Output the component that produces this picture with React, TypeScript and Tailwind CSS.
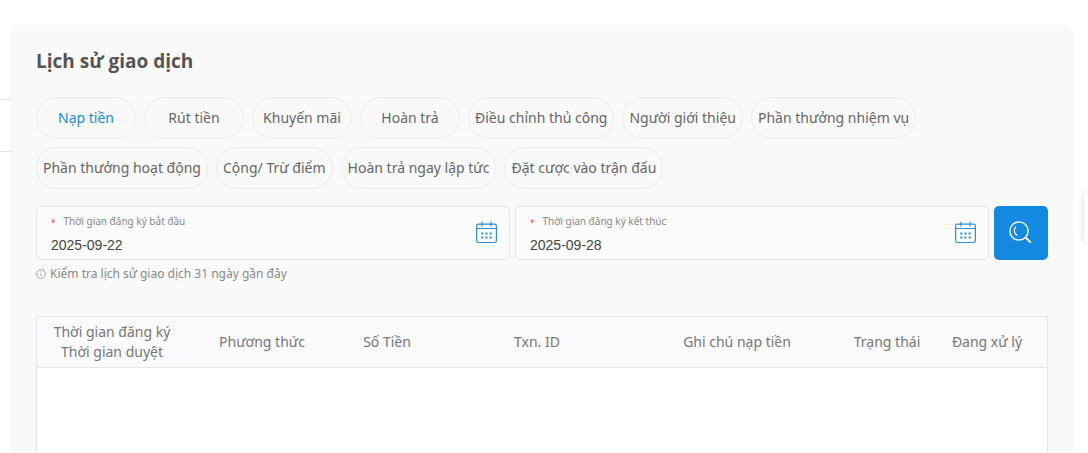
import { useState } from "react";

const tabs = [
  "Nạp tiền",
  "Rút tiền",
  "Khuyến mãi",
  "Hoàn trả",
  "Điều chỉnh thủ công",
  "Người giới thiệu",
  "Phần thưởng nhiệm vụ",
  "Phần thưởng hoạt động",
  "Cộng/ Trừ điểm",
  "Hoàn trả ngay lập tức",
  "Đặt cược vào trận đấu",
];

const columns = [
  { lines: ["Thời gian đăng ký", "Thời gian duyệt"], width: "w-[15%]" },
  { lines: ["Phương thức"], width: "w-[15%]" },
  { lines: ["Số Tiền"], width: "w-[10%]" },
  { lines: ["Txn. ID"], width: "w-[20%]" },
  { lines: ["Ghi chú nạp tiền"], width: "w-[20%]" },
  { lines: ["Trạng thái"], width: "w-[10%]" },
  { lines: ["Đang xử lý"], width: "w-[10%]" },
];

const CalendarIcon = () => (
  <svg width="22" height="24" viewBox="0 0 22 24" fill="none" stroke="#2b8fe0" strokeWidth="1.2">
    <rect x="1.6" y="3.1" width="19.8" height="18.4" rx="1.8" />
    <path d="M1.5 7.5h20M7 .5v5M16 .5v5" />
    <path d="M6.3 12.5h2M10.5 12.5h2M14.7 12.5h2M6.3 16.5h2M10.5 16.5h2M14.7 16.5h2" strokeWidth="2" />
  </svg>
);

const SearchIcon = () => (
  <svg width="24" height="24" viewBox="0 0 24 24" fill="none" stroke="#fff" strokeWidth="1.4" strokeLinecap="round">
    <circle cx="10" cy="10" r="9.1" />
    <path d="M6.8 5.9C4.6 8.2 4.8 12 7.8 14.2" strokeWidth="1.2" />
    <path d="M16.6 16.6l4.6 4.4" strokeWidth="2" />
  </svg>
);

const InfoIcon = () => (
  <svg width="10" height="10" viewBox="0 0 11 11" fill="none" stroke="#888" strokeWidth="0.8">
    <circle cx="5.5" cy="5.5" r="4.8" />
    <path d="M5.5 4.6v3.6M5.5 2.6v1" />
  </svg>
);

type DateFieldProps = {
  id: string;
  label: string;
  value: string;
  onChange: (value: string) => void;
};

const DateField = ({ id, label, value, onChange }: DateFieldProps) => (
  <div className="flex h-[54px] min-w-0 flex-1 items-center rounded-[5px] border border-[#e6e6e6] bg-[#fbfbfb] pl-3.5 pr-3">
    <div className="min-w-0 flex-1 pt-1">
      <label htmlFor={id} className="flex items-end gap-2 text-[10px] leading-4 text-[#888]">
        <span className="text-[8px] leading-3 text-[#f04040]">*</span>
        {label}
      </label>
      <input
        id={id}
        type="text"
        value={value}
        onChange={(e) => onChange(e.target.value)}
        className="mt-1 block h-6 w-full bg-transparent font-['Liberation_Sans',sans-serif] text-sm text-[#444] outline-none"
      />
    </div>
    <CalendarIcon />
  </div>
);

const App = () => {
  const [activeTab, setActiveTab] = useState(tabs[0]);
  const [startDate, setStartDate] = useState("2025-09-22");
  const [endDate, setEndDate] = useState("2025-09-28");

  return (
    <div className="flex h-screen overflow-hidden bg-white font-['Noto_Sans',sans-serif] text-sm text-[#666]">
      <div className="mt-[99px] h-[53px] w-3 shrink-0 border-y border-[#e6e6e6]" />

      <main className="mt-[26px] flex min-w-0 flex-1 flex-col rounded-t-[10px] bg-[#f9f9f9] px-6 pt-5 shadow-[0_0_3px_rgba(0,0,0,0.08)]">
        <h1 className="font-['Open_Sans',sans-serif] text-[19px] leading-[30px] font-bold text-[#555]">
          Lịch sử giao dịch
        </h1>

        <div className="mt-[21px] flex flex-wrap gap-2">
          {tabs.map((tab) => (
            <button
              key={tab}
              type="button"
              onClick={() => setActiveTab(tab)}
              className={`h-[42px] min-w-[100px] rounded-full border border-[#ebebeb] px-1.5 whitespace-nowrap ${
                tab === activeTab ? "text-[#1389e2]" : "text-[#666]"
              }`}
            >
              {tab}
            </button>
          ))}
        </div>

        <form className="mt-[17px] flex gap-[5px]" onSubmit={(e) => e.preventDefault()}>
          <DateField id="start" label="Thời gian đăng ký bắt đầu" value={startDate} onChange={setStartDate} />
          <DateField id="end" label="Thời gian đăng ký kết thúc" value={endDate} onChange={setEndDate} />
          <button
            type="submit"
            aria-label="Tìm kiếm"
            className="flex size-[54px] shrink-0 items-center justify-center rounded-[5px] bg-[#1389e2]"
          >
            <SearchIcon />
          </button>
        </form>

        <p className="mt-1 flex items-center gap-1 text-xs leading-5 text-[#888]">
          <InfoIcon />
          Kiểm tra lịch sử giao dịch 31 ngày gần đây
        </p>

        <div className="mt-8 flex-1 border border-b-0 border-[#e6e8ec] bg-white">
          <div className="border-b border-[#e6e8ec] bg-[#fafafc] pr-2.5">
            <table className="w-full table-fixed">
              <thead>
                <tr className="h-[50px]">
                  {columns.map((column) => (
                    <th key={column.lines[0]} className={`${column.width} p-0 leading-5 font-normal text-[#777]`}>
                      {column.lines.map((line) => (
                        <span key={line} className="block">
                          {line}
                        </span>
                      ))}
                    </th>
                  ))}
                </tr>
              </thead>
            </table>
          </div>
        </div>
      </main>

      <div className="mt-[193px] ml-3 h-[50px] w-1 shrink-0 rounded-l-[5px] bg-white shadow-[0_0_6px_rgba(0,0,0,0.2)]" />
    </div>
  );
};

export default App;
